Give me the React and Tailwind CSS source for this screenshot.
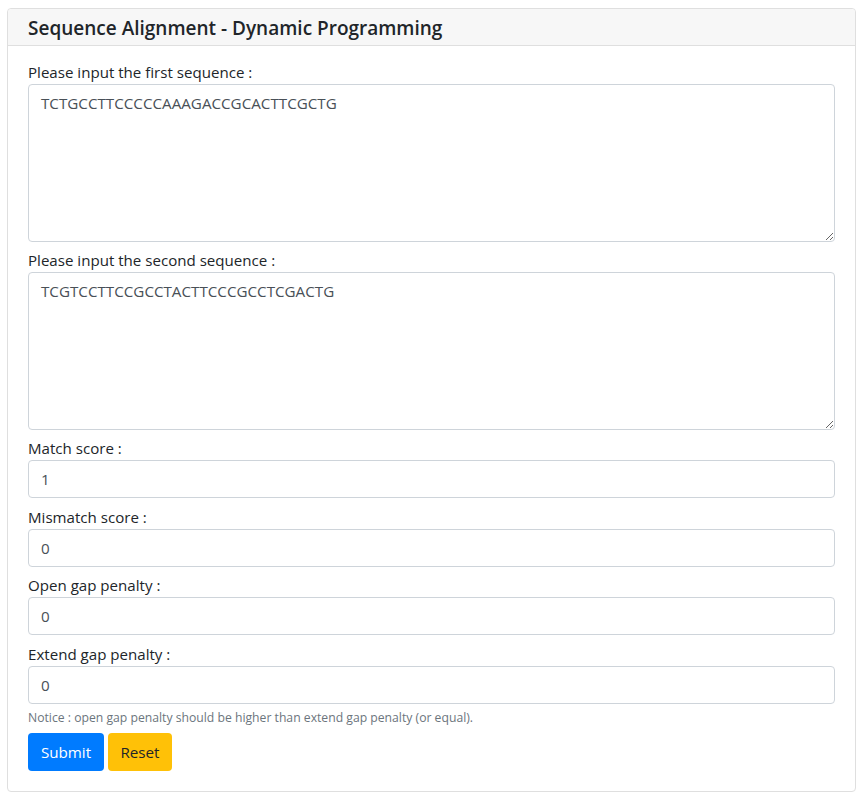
import React from 'react';

export default function App() {
  const fields = [
    { label: 'Match score :', value: '1' },
    { label: 'Mismatch score :', value: '0' },
    { label: 'Open gap penalty :', value: '0' },
    { label: 'Extend gap penalty :', value: '0' },
  ];

  return (
    <div className="min-h-screen bg-white pl-[7px] pr-[8px] pt-[8px] text-[#212529] font-['Open_Sans',sans-serif]">
      <div className="border border-[#dfdfdf] rounded-[4px] bg-white">
        {/* header */}
        <div className="bg-[#f7f7f7] border-b border-[#dfdfdf] rounded-t-[4px] px-[20px] pt-[7px] pb-[5px]">
          <h5 className="text-[19px] leading-[24px] font-semibold m-0">Sequence Alignment - Dynamic Programming</h5>
        </div>

        {/* body */}
        <form className="px-[20px] pt-[14px] pb-[20px]" onSubmit={e => e.preventDefault()}>
          <div className="mb-[6.5px]">
            <label className="block text-[15.1px] leading-[24px]">Please input the first sequence :</label>
            <textarea
              className="block w-full h-[157.5px] border border-[#ced4da] rounded-[4px] px-[12px] py-[6px] text-[15.2px] leading-[24px] text-[#495057] outline-none"
              defaultValue="TCTGCCTTCCCCCAAAGACCGCACTTCGCTG"
            />
          </div>
          <div className="mb-[6.5px]">
            <label className="block text-[15.1px] leading-[24px]">Please input the second sequence :</label>
            <textarea
              className="block w-full h-[157.5px] border border-[#ced4da] rounded-[4px] px-[12px] py-[6px] text-[15.2px] leading-[24px] text-[#495057] outline-none"
              defaultValue="TCGTCCTTCCGCCTACTTCCCGCCTCGACTG"
            />
          </div>
          {fields.map((f, i) => (
            <div key={f.label} className={i < fields.length - 1 ? 'mb-[6.6px]' : ''}>
              <label className="block text-[15.1px] leading-[24px]">{f.label}</label>
              <input
                type="text"
                className="block w-full h-[38px] border border-[#ced4da] rounded-[4px] px-[12px] py-[6px] text-[15.2px] leading-[24px] text-[#495057] outline-none"
                defaultValue={f.value}
              />
            </div>
          ))}
          <small className="block mt-[4px] text-[12.2px] leading-[19.2px] text-[#6c757d]">
            Notice : open gap penalty should be higher than extend gap penalty (or equal).
          </small>
          <div className="flex gap-[4px] mt-[6px]">
            <button type="submit" className="h-[38px] w-[76px] rounded-[4px] bg-[#007bff] text-white text-[15.2px] leading-[24px]">Submit</button>
            <button type="reset" className="h-[38px] w-[64px] rounded-[4px] bg-[#ffc107] text-[#212529] text-[15.2px] leading-[24px]">Reset</button>
          </div>
        </form>
      </div>
    </div>
  );
}
